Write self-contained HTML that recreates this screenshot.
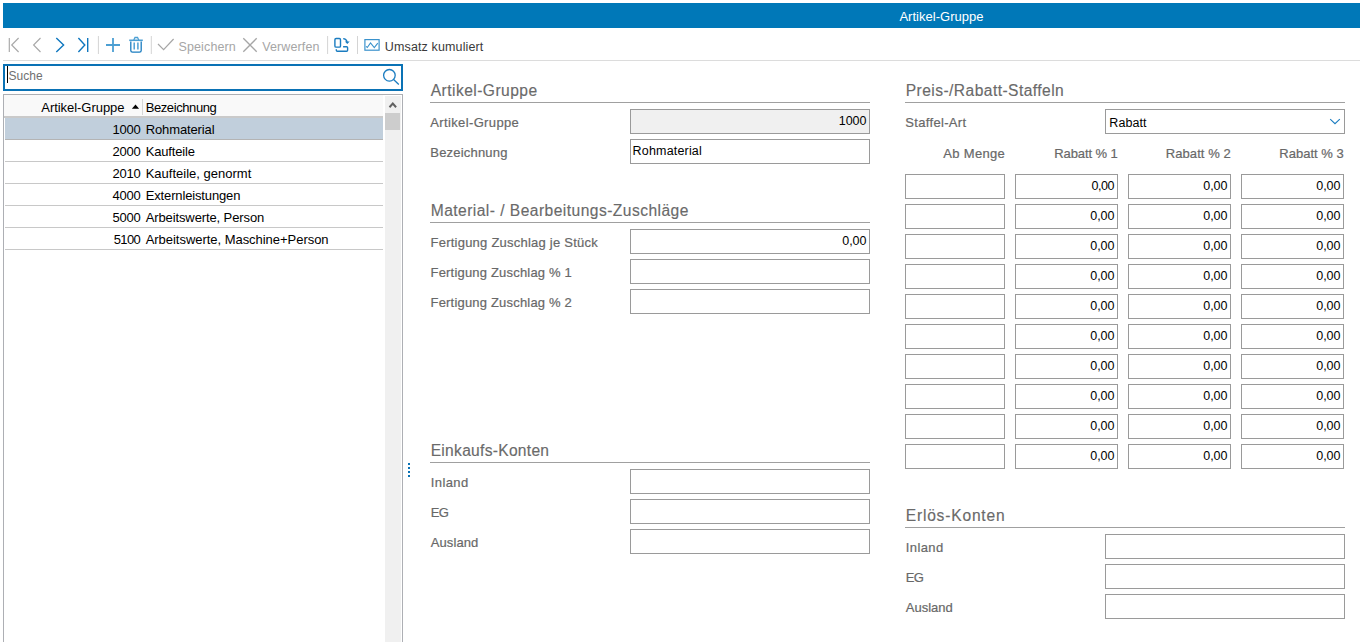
<!DOCTYPE html>
<html><head><meta charset="utf-8"><style>
html,body{margin:0;padding:0;width:1360px;height:642px;overflow:hidden;background:#fff;position:relative;font-family:"Liberation Sans", sans-serif;}
div{position:absolute;}
.t{white-space:nowrap;}
</style></head><body>
<div style="left:3px;top:3px;width:1357px;height:25px;background:#0078b8"></div>
<div class="t" style="left:641.5px;width:600px;text-align:center;top:10.00px;font-size:13px;line-height:13px;color:#fff;letter-spacing:0.023px;"><span>Artikel-Gruppe</span></div>
<div style="left:3px;top:60px;width:1357px;height:1px;background:#dcdcdc"></div>
<div style="left:3px;top:64px;width:400px;height:27px;box-sizing:border-box;border:2px solid #0a72b5;background:#fff"></div>
<div style="left:7px;top:66px;width:1px;height:17px;background:#000"></div>
<div class="t" style="left:8.5px;top:69.84px;font-size:12px;line-height:12px;color:#707070;letter-spacing:0.023px;"><span>Suche</span></div>
<div style="left:3px;top:94px;width:400px;height:560px;box-sizing:border-box;border:1px solid #adafb4;background:#fff"></div>
<div style="left:4px;top:95px;width:379px;height:21px;background:#f9f9f9"></div>
<div style="left:4px;top:116px;width:379px;height:2px;background:#cacaca"></div>
<div class="t" style="left:-275.5px;width:399.954px;text-align:right;top:101.00px;font-size:13px;line-height:13px;color:#000;letter-spacing:-0.046px;"><span>Artikel-Gruppe</span></div>
<div class="t" style="left:145.7px;top:101.00px;font-size:13px;line-height:13px;color:#000;letter-spacing:-0.410px;"><span>Bezeichnung</span></div>
<div style="left:142px;top:99px;width:1px;height:16px;background:#d6d6d6"></div>
<div style="left:5px;top:118px;width:378px;height:21px;background:#c1cfdc"></div>
<div style="left:5px;top:139px;width:378px;height:1px;background:#b4b4b4"></div>
<div class="t" style="left:-259.2px;width:399.819px;text-align:right;top:122.50px;font-size:13px;line-height:13px;color:#000;letter-spacing:-0.181px;"><span>1000</span></div>
<div class="t" style="left:145.7px;top:122.50px;font-size:13px;line-height:13px;color:#000;letter-spacing:-0.120px;"><span>Rohmaterial</span></div>
<div style="left:5px;top:161px;width:378px;height:1px;background:#c8c8c8"></div>
<div class="t" style="left:-259.2px;width:399.819px;text-align:right;top:144.50px;font-size:13px;line-height:13px;color:#000;letter-spacing:-0.181px;"><span>2000</span></div>
<div class="t" style="left:145.7px;top:144.50px;font-size:13px;line-height:13px;color:#000;letter-spacing:-0.175px;"><span>Kaufteile</span></div>
<div style="left:5px;top:183px;width:378px;height:1px;background:#c8c8c8"></div>
<div class="t" style="left:-259.2px;width:399.819px;text-align:right;top:166.50px;font-size:13px;line-height:13px;color:#000;letter-spacing:-0.181px;"><span>2010</span></div>
<div class="t" style="left:145.7px;top:166.50px;font-size:13px;line-height:13px;color:#000;letter-spacing:0.006px;"><span>Kaufteile, genormt</span></div>
<div style="left:5px;top:205px;width:378px;height:1px;background:#c8c8c8"></div>
<div class="t" style="left:-259.2px;width:399.819px;text-align:right;top:188.50px;font-size:13px;line-height:13px;color:#000;letter-spacing:-0.181px;"><span>4000</span></div>
<div class="t" style="left:145.7px;top:188.50px;font-size:13px;line-height:13px;color:#000;letter-spacing:-0.140px;"><span>Externleistungen</span></div>
<div style="left:5px;top:227px;width:378px;height:1px;background:#c8c8c8"></div>
<div class="t" style="left:-259.2px;width:399.819px;text-align:right;top:210.50px;font-size:13px;line-height:13px;color:#000;letter-spacing:-0.181px;"><span>5000</span></div>
<div class="t" style="left:145.7px;top:210.50px;font-size:13px;line-height:13px;color:#000;letter-spacing:-0.111px;"><span>Arbeitswerte, Person</span></div>
<div style="left:5px;top:249px;width:378px;height:1px;background:#c8c8c8"></div>
<div class="t" style="left:-259.2px;width:399.400px;text-align:right;top:232.50px;font-size:13px;line-height:13px;color:#000;letter-spacing:-0.600px;"><span>5100</span></div>
<div class="t" style="left:145.7px;top:232.50px;font-size:13px;line-height:13px;color:#000;letter-spacing:-0.036px;"><span>Arbeitswerte, Maschine+Person</span></div>
<div style="left:385px;top:96px;width:16px;height:560px;background:#f0f0f0"></div>
<div style="left:385px;top:113px;width:15px;height:17px;background:#cdcdcd"></div>
<div style="left:408px;top:463px;width:2px;height:2px;background:#0a72b5"></div>
<div style="left:408px;top:467px;width:2px;height:2px;background:#0a72b5"></div>
<div style="left:408px;top:471px;width:2px;height:2px;background:#0a72b5"></div>
<div style="left:408px;top:475px;width:2px;height:2px;background:#0a72b5"></div>
<div class="t" style="left:430.7px;top:82.69px;font-size:15.6px;line-height:15.6px;color:#6a6a6a;letter-spacing:0.454px;-webkit-text-stroke:0.15px #6a6a6a;"><span>Artikel-Gruppe</span></div>
<div style="left:430px;top:102px;width:440px;height:1px;background:#a0a0a0"></div>
<div class="t" style="left:430.3px;top:115.80px;font-size:13px;line-height:13px;color:#686868;letter-spacing:0.362px;-webkit-text-stroke:0.2px #686868;"><span>Artikel-Gruppe</span></div>
<div style="left:630px;top:109px;width:240px;height:25px;box-sizing:border-box;border:1px solid #9a9a9a;background:#f0f0f0"></div>
<div class="t" style="left:466.4px;width:399.924px;text-align:right;top:114.82px;font-size:12.5px;line-height:12.5px;color:#000;letter-spacing:-0.076px;"><span>1000</span></div>
<div class="t" style="left:430.3px;top:145.80px;font-size:13px;line-height:13px;color:#686868;letter-spacing:0.192px;-webkit-text-stroke:0.2px #686868;"><span>Bezeichnung</span></div>
<div style="left:630px;top:139px;width:240px;height:25px;box-sizing:border-box;border:1px solid #9a9a9a;background:#fff"></div>
<div class="t" style="left:632.6px;top:145.42px;font-size:12.5px;line-height:12.5px;color:#000;letter-spacing:0.180px;"><span>Rohmaterial</span></div>
<div class="t" style="left:430.7px;top:202.79px;font-size:15.6px;line-height:15.6px;color:#6a6a6a;letter-spacing:0.455px;-webkit-text-stroke:0.15px #6a6a6a;"><span>Material- / Bearbeitungs-Zuschläge</span></div>
<div style="left:430px;top:222px;width:440px;height:1px;background:#a0a0a0"></div>
<div class="t" style="left:430.5px;top:235.80px;font-size:13px;line-height:13px;color:#686868;letter-spacing:0.235px;-webkit-text-stroke:0.2px #686868;"><span>Fertigung Zuschlag je Stück</span></div>
<div style="left:630px;top:229px;width:240px;height:25px;box-sizing:border-box;border:1px solid #9a9a9a;background:#fff"></div>
<div class="t" style="left:466.4px;width:399.924px;text-align:right;top:235.22px;font-size:12.5px;line-height:12.5px;color:#000;letter-spacing:-0.076px;"><span>0,00</span></div>
<div class="t" style="left:430.5px;top:265.80px;font-size:13px;line-height:13px;color:#686868;letter-spacing:0.192px;-webkit-text-stroke:0.2px #686868;"><span>Fertigung Zuschlag % 1</span></div>
<div style="left:630px;top:259px;width:240px;height:25px;box-sizing:border-box;border:1px solid #9a9a9a;background:#fff"></div>
<div class="t" style="left:430.5px;top:295.80px;font-size:13px;line-height:13px;color:#686868;letter-spacing:0.192px;-webkit-text-stroke:0.2px #686868;"><span>Fertigung Zuschlag % 2</span></div>
<div style="left:630px;top:289px;width:240px;height:25px;box-sizing:border-box;border:1px solid #9a9a9a;background:#fff"></div>
<div class="t" style="left:430.7px;top:442.99px;font-size:15.6px;line-height:15.6px;color:#6a6a6a;letter-spacing:0.279px;-webkit-text-stroke:0.15px #6a6a6a;"><span>Einkaufs-Konten</span></div>
<div style="left:430px;top:462px;width:440px;height:1px;background:#a0a0a0"></div>
<div class="t" style="left:430.8px;top:475.70px;font-size:13px;line-height:13px;color:#686868;letter-spacing:0.380px;-webkit-text-stroke:0.2px #686868;"><span>Inland</span></div>
<div style="left:630px;top:469px;width:240px;height:25px;box-sizing:border-box;border:1px solid #9a9a9a;background:#fff"></div>
<div class="t" style="left:430.8px;top:505.70px;font-size:13px;line-height:13px;color:#686868;letter-spacing:-0.600px;-webkit-text-stroke:0.2px #686868;"><span>EG</span></div>
<div style="left:630px;top:499px;width:240px;height:25px;box-sizing:border-box;border:1px solid #9a9a9a;background:#fff"></div>
<div class="t" style="left:430.8px;top:535.70px;font-size:13px;line-height:13px;color:#686868;letter-spacing:0.083px;-webkit-text-stroke:0.2px #686868;"><span>Ausland</span></div>
<div style="left:630px;top:529px;width:240px;height:25px;box-sizing:border-box;border:1px solid #9a9a9a;background:#fff"></div>
<div class="t" style="left:905.7px;top:82.69px;font-size:15.6px;line-height:15.6px;color:#6a6a6a;letter-spacing:0.443px;-webkit-text-stroke:0.15px #6a6a6a;"><span>Preis-/Rabatt-Staffeln</span></div>
<div style="left:905px;top:102px;width:440px;height:1px;background:#a0a0a0"></div>
<div class="t" style="left:905.3px;top:115.80px;font-size:13px;line-height:13px;color:#686868;letter-spacing:0.320px;-webkit-text-stroke:0.2px #686868;"><span>Staffel-Art</span></div>
<div style="left:1105px;top:109px;width:240px;height:25px;box-sizing:border-box;border:1px solid #9a9a9a;background:#fff"></div>
<div class="t" style="left:1109.3px;top:117.42px;font-size:12.5px;line-height:12.5px;color:#000;letter-spacing:0.060px;"><span>Rabatt</span></div>
<div class="t" style="left:604.8px;width:400.329px;text-align:right;top:147.00px;font-size:13px;line-height:13px;color:#686868;letter-spacing:0.329px;-webkit-text-stroke:0.2px #686868;"><span>Ab Menge</span></div>
<div class="t" style="left:717.8px;width:399.911px;text-align:right;top:147.00px;font-size:13px;line-height:13px;color:#686868;letter-spacing:-0.089px;-webkit-text-stroke:0.2px #686868;"><span>Rabatt % 1</span></div>
<div class="t" style="left:830.8px;width:400.078px;text-align:right;top:147.00px;font-size:13px;line-height:13px;color:#686868;letter-spacing:0.078px;-webkit-text-stroke:0.2px #686868;"><span>Rabatt % 2</span></div>
<div class="t" style="left:943.8px;width:400.011px;text-align:right;top:147.00px;font-size:13px;line-height:13px;color:#686868;letter-spacing:0.011px;-webkit-text-stroke:0.2px #686868;"><span>Rabatt % 3</span></div>
<div style="left:905px;top:174px;width:100px;height:25px;box-sizing:border-box;border:1px solid #9a9a9a;background:#fff"></div>
<div style="left:1015px;top:174px;width:103px;height:25px;box-sizing:border-box;border:1px solid #9a9a9a;background:#fff"></div>
<div class="t" style="left:714.4000000000001px;width:399.533px;text-align:right;top:180.22px;font-size:12.5px;line-height:12.5px;color:#000;letter-spacing:-0.467px;"><span>0,00</span></div>
<div style="left:1128px;top:174px;width:103px;height:25px;box-sizing:border-box;border:1px solid #9a9a9a;background:#fff"></div>
<div class="t" style="left:827.4000000000001px;width:399.924px;text-align:right;top:180.22px;font-size:12.5px;line-height:12.5px;color:#000;letter-spacing:-0.076px;"><span>0,00</span></div>
<div style="left:1241px;top:174px;width:103px;height:25px;box-sizing:border-box;border:1px solid #9a9a9a;background:#fff"></div>
<div class="t" style="left:940.4000000000001px;width:399.924px;text-align:right;top:180.22px;font-size:12.5px;line-height:12.5px;color:#000;letter-spacing:-0.076px;"><span>0,00</span></div>
<div style="left:905px;top:204px;width:100px;height:25px;box-sizing:border-box;border:1px solid #9a9a9a;background:#fff"></div>
<div style="left:1015px;top:204px;width:103px;height:25px;box-sizing:border-box;border:1px solid #9a9a9a;background:#fff"></div>
<div class="t" style="left:714.4000000000001px;width:399.924px;text-align:right;top:210.22px;font-size:12.5px;line-height:12.5px;color:#000;letter-spacing:-0.076px;"><span>0,00</span></div>
<div style="left:1128px;top:204px;width:103px;height:25px;box-sizing:border-box;border:1px solid #9a9a9a;background:#fff"></div>
<div class="t" style="left:827.4000000000001px;width:399.924px;text-align:right;top:210.22px;font-size:12.5px;line-height:12.5px;color:#000;letter-spacing:-0.076px;"><span>0,00</span></div>
<div style="left:1241px;top:204px;width:103px;height:25px;box-sizing:border-box;border:1px solid #9a9a9a;background:#fff"></div>
<div class="t" style="left:940.4000000000001px;width:399.924px;text-align:right;top:210.22px;font-size:12.5px;line-height:12.5px;color:#000;letter-spacing:-0.076px;"><span>0,00</span></div>
<div style="left:905px;top:234px;width:100px;height:25px;box-sizing:border-box;border:1px solid #9a9a9a;background:#fff"></div>
<div style="left:1015px;top:234px;width:103px;height:25px;box-sizing:border-box;border:1px solid #9a9a9a;background:#fff"></div>
<div class="t" style="left:714.4000000000001px;width:399.924px;text-align:right;top:240.22px;font-size:12.5px;line-height:12.5px;color:#000;letter-spacing:-0.076px;"><span>0,00</span></div>
<div style="left:1128px;top:234px;width:103px;height:25px;box-sizing:border-box;border:1px solid #9a9a9a;background:#fff"></div>
<div class="t" style="left:827.4000000000001px;width:399.924px;text-align:right;top:240.22px;font-size:12.5px;line-height:12.5px;color:#000;letter-spacing:-0.076px;"><span>0,00</span></div>
<div style="left:1241px;top:234px;width:103px;height:25px;box-sizing:border-box;border:1px solid #9a9a9a;background:#fff"></div>
<div class="t" style="left:940.4000000000001px;width:399.924px;text-align:right;top:240.22px;font-size:12.5px;line-height:12.5px;color:#000;letter-spacing:-0.076px;"><span>0,00</span></div>
<div style="left:905px;top:264px;width:100px;height:25px;box-sizing:border-box;border:1px solid #9a9a9a;background:#fff"></div>
<div style="left:1015px;top:264px;width:103px;height:25px;box-sizing:border-box;border:1px solid #9a9a9a;background:#fff"></div>
<div class="t" style="left:714.4000000000001px;width:399.924px;text-align:right;top:270.22px;font-size:12.5px;line-height:12.5px;color:#000;letter-spacing:-0.076px;"><span>0,00</span></div>
<div style="left:1128px;top:264px;width:103px;height:25px;box-sizing:border-box;border:1px solid #9a9a9a;background:#fff"></div>
<div class="t" style="left:827.4000000000001px;width:399.924px;text-align:right;top:270.22px;font-size:12.5px;line-height:12.5px;color:#000;letter-spacing:-0.076px;"><span>0,00</span></div>
<div style="left:1241px;top:264px;width:103px;height:25px;box-sizing:border-box;border:1px solid #9a9a9a;background:#fff"></div>
<div class="t" style="left:940.4000000000001px;width:399.924px;text-align:right;top:270.22px;font-size:12.5px;line-height:12.5px;color:#000;letter-spacing:-0.076px;"><span>0,00</span></div>
<div style="left:905px;top:294px;width:100px;height:25px;box-sizing:border-box;border:1px solid #9a9a9a;background:#fff"></div>
<div style="left:1015px;top:294px;width:103px;height:25px;box-sizing:border-box;border:1px solid #9a9a9a;background:#fff"></div>
<div class="t" style="left:714.4000000000001px;width:399.924px;text-align:right;top:300.22px;font-size:12.5px;line-height:12.5px;color:#000;letter-spacing:-0.076px;"><span>0,00</span></div>
<div style="left:1128px;top:294px;width:103px;height:25px;box-sizing:border-box;border:1px solid #9a9a9a;background:#fff"></div>
<div class="t" style="left:827.4000000000001px;width:399.924px;text-align:right;top:300.22px;font-size:12.5px;line-height:12.5px;color:#000;letter-spacing:-0.076px;"><span>0,00</span></div>
<div style="left:1241px;top:294px;width:103px;height:25px;box-sizing:border-box;border:1px solid #9a9a9a;background:#fff"></div>
<div class="t" style="left:940.4000000000001px;width:399.924px;text-align:right;top:300.22px;font-size:12.5px;line-height:12.5px;color:#000;letter-spacing:-0.076px;"><span>0,00</span></div>
<div style="left:905px;top:324px;width:100px;height:25px;box-sizing:border-box;border:1px solid #9a9a9a;background:#fff"></div>
<div style="left:1015px;top:324px;width:103px;height:25px;box-sizing:border-box;border:1px solid #9a9a9a;background:#fff"></div>
<div class="t" style="left:714.4000000000001px;width:399.924px;text-align:right;top:330.22px;font-size:12.5px;line-height:12.5px;color:#000;letter-spacing:-0.076px;"><span>0,00</span></div>
<div style="left:1128px;top:324px;width:103px;height:25px;box-sizing:border-box;border:1px solid #9a9a9a;background:#fff"></div>
<div class="t" style="left:827.4000000000001px;width:399.924px;text-align:right;top:330.22px;font-size:12.5px;line-height:12.5px;color:#000;letter-spacing:-0.076px;"><span>0,00</span></div>
<div style="left:1241px;top:324px;width:103px;height:25px;box-sizing:border-box;border:1px solid #9a9a9a;background:#fff"></div>
<div class="t" style="left:940.4000000000001px;width:399.924px;text-align:right;top:330.22px;font-size:12.5px;line-height:12.5px;color:#000;letter-spacing:-0.076px;"><span>0,00</span></div>
<div style="left:905px;top:354px;width:100px;height:25px;box-sizing:border-box;border:1px solid #9a9a9a;background:#fff"></div>
<div style="left:1015px;top:354px;width:103px;height:25px;box-sizing:border-box;border:1px solid #9a9a9a;background:#fff"></div>
<div class="t" style="left:714.4000000000001px;width:399.924px;text-align:right;top:360.22px;font-size:12.5px;line-height:12.5px;color:#000;letter-spacing:-0.076px;"><span>0,00</span></div>
<div style="left:1128px;top:354px;width:103px;height:25px;box-sizing:border-box;border:1px solid #9a9a9a;background:#fff"></div>
<div class="t" style="left:827.4000000000001px;width:399.924px;text-align:right;top:360.22px;font-size:12.5px;line-height:12.5px;color:#000;letter-spacing:-0.076px;"><span>0,00</span></div>
<div style="left:1241px;top:354px;width:103px;height:25px;box-sizing:border-box;border:1px solid #9a9a9a;background:#fff"></div>
<div class="t" style="left:940.4000000000001px;width:399.924px;text-align:right;top:360.22px;font-size:12.5px;line-height:12.5px;color:#000;letter-spacing:-0.076px;"><span>0,00</span></div>
<div style="left:905px;top:384px;width:100px;height:25px;box-sizing:border-box;border:1px solid #9a9a9a;background:#fff"></div>
<div style="left:1015px;top:384px;width:103px;height:25px;box-sizing:border-box;border:1px solid #9a9a9a;background:#fff"></div>
<div class="t" style="left:714.4000000000001px;width:399.924px;text-align:right;top:390.22px;font-size:12.5px;line-height:12.5px;color:#000;letter-spacing:-0.076px;"><span>0,00</span></div>
<div style="left:1128px;top:384px;width:103px;height:25px;box-sizing:border-box;border:1px solid #9a9a9a;background:#fff"></div>
<div class="t" style="left:827.4000000000001px;width:399.924px;text-align:right;top:390.22px;font-size:12.5px;line-height:12.5px;color:#000;letter-spacing:-0.076px;"><span>0,00</span></div>
<div style="left:1241px;top:384px;width:103px;height:25px;box-sizing:border-box;border:1px solid #9a9a9a;background:#fff"></div>
<div class="t" style="left:940.4000000000001px;width:399.924px;text-align:right;top:390.22px;font-size:12.5px;line-height:12.5px;color:#000;letter-spacing:-0.076px;"><span>0,00</span></div>
<div style="left:905px;top:414px;width:100px;height:25px;box-sizing:border-box;border:1px solid #9a9a9a;background:#fff"></div>
<div style="left:1015px;top:414px;width:103px;height:25px;box-sizing:border-box;border:1px solid #9a9a9a;background:#fff"></div>
<div class="t" style="left:714.4000000000001px;width:399.924px;text-align:right;top:420.22px;font-size:12.5px;line-height:12.5px;color:#000;letter-spacing:-0.076px;"><span>0,00</span></div>
<div style="left:1128px;top:414px;width:103px;height:25px;box-sizing:border-box;border:1px solid #9a9a9a;background:#fff"></div>
<div class="t" style="left:827.4000000000001px;width:399.924px;text-align:right;top:420.22px;font-size:12.5px;line-height:12.5px;color:#000;letter-spacing:-0.076px;"><span>0,00</span></div>
<div style="left:1241px;top:414px;width:103px;height:25px;box-sizing:border-box;border:1px solid #9a9a9a;background:#fff"></div>
<div class="t" style="left:940.4000000000001px;width:399.924px;text-align:right;top:420.22px;font-size:12.5px;line-height:12.5px;color:#000;letter-spacing:-0.076px;"><span>0,00</span></div>
<div style="left:905px;top:444px;width:100px;height:25px;box-sizing:border-box;border:1px solid #9a9a9a;background:#fff"></div>
<div style="left:1015px;top:444px;width:103px;height:25px;box-sizing:border-box;border:1px solid #9a9a9a;background:#fff"></div>
<div class="t" style="left:714.4000000000001px;width:399.924px;text-align:right;top:450.22px;font-size:12.5px;line-height:12.5px;color:#000;letter-spacing:-0.076px;"><span>0,00</span></div>
<div style="left:1128px;top:444px;width:103px;height:25px;box-sizing:border-box;border:1px solid #9a9a9a;background:#fff"></div>
<div class="t" style="left:827.4000000000001px;width:399.924px;text-align:right;top:450.22px;font-size:12.5px;line-height:12.5px;color:#000;letter-spacing:-0.076px;"><span>0,00</span></div>
<div style="left:1241px;top:444px;width:103px;height:25px;box-sizing:border-box;border:1px solid #9a9a9a;background:#fff"></div>
<div class="t" style="left:940.4000000000001px;width:399.924px;text-align:right;top:450.22px;font-size:12.5px;line-height:12.5px;color:#000;letter-spacing:-0.076px;"><span>0,00</span></div>
<div class="t" style="left:905.7px;top:508.19px;font-size:15.6px;line-height:15.6px;color:#6a6a6a;letter-spacing:0.800px;-webkit-text-stroke:0.15px #6a6a6a;"><span>Erlös-Konten</span></div>
<div style="left:905px;top:527px;width:440px;height:1px;background:#a0a0a0"></div>
<div class="t" style="left:905.8px;top:540.80px;font-size:13px;line-height:13px;color:#686868;letter-spacing:0.400px;-webkit-text-stroke:0.2px #686868;"><span>Inland</span></div>
<div style="left:1105px;top:534px;width:240px;height:25px;box-sizing:border-box;border:1px solid #9a9a9a;background:#fff"></div>
<div class="t" style="left:905.8px;top:570.80px;font-size:13px;line-height:13px;color:#686868;letter-spacing:-0.600px;-webkit-text-stroke:0.2px #686868;"><span>EG</span></div>
<div style="left:1105px;top:564px;width:240px;height:25px;box-sizing:border-box;border:1px solid #9a9a9a;background:#fff"></div>
<div class="t" style="left:905.8px;top:600.80px;font-size:13px;line-height:13px;color:#686868;letter-spacing:0.000px;-webkit-text-stroke:0.2px #686868;"><span>Ausland</span></div>
<div style="left:1105px;top:594px;width:240px;height:25px;box-sizing:border-box;border:1px solid #9a9a9a;background:#fff"></div>
<div class="t" style="left:178.5px;top:41.02px;font-size:12.5px;line-height:12.5px;color:#a6a6a6;letter-spacing:0.125px;"><span>Speichern</span></div>
<div class="t" style="left:262.2px;top:41.02px;font-size:12.5px;line-height:12.5px;color:#a6a6a6;letter-spacing:0.125px;"><span>Verwerfen</span></div>
<div class="t" style="left:384.8px;top:41.02px;font-size:12.5px;line-height:12.5px;color:#3a3a3a;letter-spacing:0.133px;"><span>Umsatz kumuliert</span></div>
<svg style="position:absolute;left:0;top:0" width="1360" height="642" viewBox="0 0 1360 642">
 <g fill="none" stroke-linecap="butt">
  <path d="M9.3 38 V52 M18.6 38 L11.7 45 L18.6 52" stroke="#a8a8a8" stroke-width="1.15"/>
  <path d="M40.5 38 L33.6 45 L40.5 52" stroke="#a8a8a8" stroke-width="1.15"/>
  <path d="M56.3 38 L63.6 45 L56.3 52" stroke="#0f77bf" stroke-width="1.4"/>
  <path d="M78.4 38 L84.8 45 L78.4 52 M87.7 38 V52" stroke="#0f77bf" stroke-width="1.4"/>
  <path d="M98.4 36 V54 M151.3 36 V54 M327.6 36 V54 M357.5 36 V54" stroke="#d4d4d4" stroke-width="1"/>
  <path d="M106 45 H120 M113 38 V52" stroke="#4c9fd3" stroke-width="1.8"/>
  <path d="M129.2 40.3 H142.8" stroke="#4c9fd3" stroke-width="1.6"/>
  <path d="M133.8 40 L135 37.5 H137.5 L138.8 40" stroke="#4c9fd3" stroke-width="1.3"/>
  <path d="M130.8 41.5 V50.5 Q130.8 52.2 132.5 52.2 H139.5 Q141.2 52.2 141.2 50.5 V41.5" stroke="#1a7cc0" stroke-width="1.3"/>
  <path d="M134.2 42.6 V49.6 M137.9 42.6 V49.6" stroke="#4c9fd3" stroke-width="1.5"/>
  <path d="M158 44 L163.6 49.6 L173.6 39" stroke="#a6a6a6" stroke-width="1.2"/>
  <path d="M243.3 38.3 L256.7 51.7 M256.7 38.3 L243.3 51.7" stroke="#a6a6a6" stroke-width="1.3"/>
  <rect x="334.9" y="38.5" width="5.6" height="8.6" rx="1.2" stroke="#1a7cc0" stroke-width="1.4"/>
  <path d="M343.2 38.6 Q346.3 38.8 347.1 42" stroke="#1a7cc0" stroke-width="1.4"/>
  <path d="M344.9 41.4 L349.7 41.4 L347.3 44 Z" fill="#1a7cc0" stroke="none"/>
  <path d="M343.1 46.7 H346.6 Q347.6 46.7 347.6 47.7 V50.3 Q347.6 51.3 346.6 51.3 H337.3 Q336.3 51.3 336.3 50.3 V49.3" stroke="#1a7cc0" stroke-width="1.4"/>
  <rect x="364.9" y="39.6" width="14.2" height="10.6" stroke="#3a92cc" stroke-width="1.2"/>
  <path d="M366.1 46.3 L367.3 47.5 L370.5 42.9 L374.3 47.7 L377.8 43.1" stroke="#3a92cc" stroke-width="1.1"/>
  <circle cx="389.4" cy="75.3" r="5.8" stroke="#1a7cc0" stroke-width="1.3"/>
  <path d="M393.6 79.5 L398.8 84.5" stroke="#1a7cc0" stroke-width="1.3"/>
  <path d="M389.5 107.2 L392.8 103.6 L396.1 107.2" stroke="#606060" stroke-width="2"/>
  <path d="M131.9 108.8 L135.5 104.4 L139.1 108.8 Z" fill="#000" stroke="none"/>
  <path d="M1330.2 119.2 L1335 123.7 L1339.8 119.2" stroke="#1a7cc0" stroke-width="1.1"/>
 </g>
</svg>
</body></html>
